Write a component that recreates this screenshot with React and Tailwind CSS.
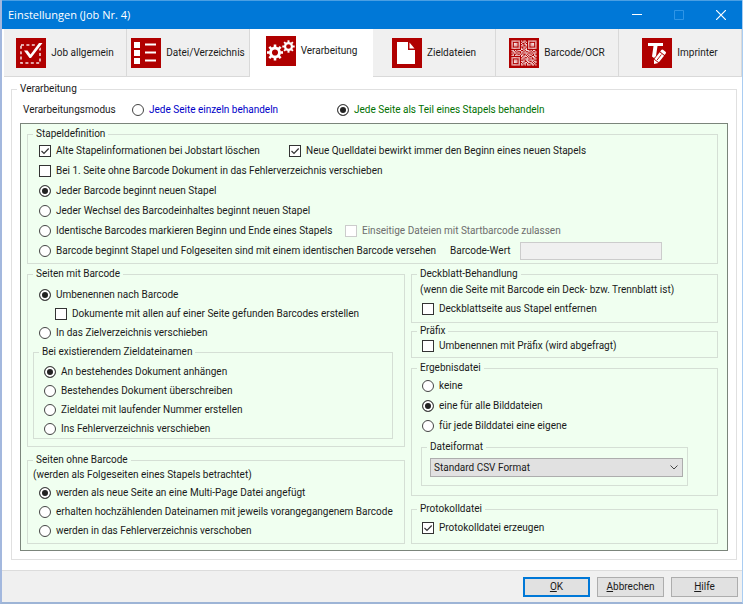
// src/App.jsx
// Job settings dialog - tab "Verarbeitung"
import { useState } from 'react'

// Tab icons, all on a 30x30 red tile
function Tile({ children }) {
  return (
    <svg width="30" height="30" viewBox="0 0 30 30" className="shrink-0" aria-hidden="true">
      <rect width="30" height="30" fill="#b00000" />
      {children}
    </svg>
  )
}

function JobIcon() {
  return (
    <Tile>
      <rect x="5" y="7" width="19" height="18" fill="none" stroke="#f6dcdc" strokeWidth="1.6" strokeDasharray="3 2.4" />
      <path d="M7.500 12l5.500 6L24.500 5.500" fill="none" stroke="#b00000" strokeWidth="5.500" />
      <path d="M8 12.500h3.500l3 4L23 5h3.500L15 20h-1.500z" fill="#fff" />
    </Tile>
  )
}

function ListIcon() {
  return (
    <Tile>
      {[4, 12, 20].map(y => (
        <g key={y} fill="#fff">
          <rect x="3" y={y} width="6" height="6" />
          <rect x="14" y={y + 1.5} width="11" height="2" />
        </g>
      ))}
    </Tile>
  )
}

function Gear({ cx, cy, r }) {
  const teeth = [0, 45, 90, 135, 180, 225, 270, 315]
  return (
    <g transform={`translate(${cx} ${cy})`}>
      <circle r={r * 0.56} fill="none" stroke="#fff" strokeWidth={r * 0.36} />
      {teeth.map(a => (
        <rect key={a} x={-r * 0.16} y={-r} width={r * 0.32} height={r * 0.35} fill="#fff" transform={`rotate(${a})`} />
      ))}
    </g>
  )
}

function GearsIcon() {
  return (
    <Tile>
      <Gear cx={9} cy={16.5} r={8} />
      <Gear cx={22.5} cy={10.5} r={6.2} />
    </Tile>
  )
}

function FileIcon() {
  return (
    <Tile>
      <path d="M5 4h11v8h7v14H5z" fill="#fff" />
      <path d="M17.500 4.500l5 6h-5z" fill="#fff" />
    </Tile>
  )
}

const QR = [
  '111111101011001111111',
  '100000100110101000001',
  '101110101001001011101',
  '101110100101101011101',
  '101110101100101011101',
  '100000100011001000001',
  '111111101010101111111',
  '000000001101100000000',
  '110101110010111010110',
  '011010001101001101001',
  '101101101011110010111',
  '010010010100101101010',
  '110111101101010110011',
  '000000001011101001101',
  '111111100110010110110',
  '100000101101111010011',
  '101110100010110111100',
  '101110101110011001011',
  '101110100101101110101',
  '100000101011010011010',
  '111111101101011101101',
]

function QrIcon() {
  return (
    <Tile>
      <g transform="translate(2.5 2.5) scale(1.19)" fill="#f8e4e4">
        {QR.map((row, y) =>
          row.split('').map((c, x) => (c === '1' ? <rect key={`${x}-${y}`} x={x} y={y} width="1" height="1" /> : null))
        )}
      </g>
    </Tile>
  )
}

function ImprinterIcon() {
  return (
    <Tile>
      <path d="M6 8V5h15v3h-5.500L14 18l-2 2-2-1.500L11.500 8z" fill="#fff" />
      <g transform="translate(12 26) rotate(-52)" fill="#fff">
        <path d="M0 0l3.500-2.800v5.600z" />
        <path d="M4.300-2.800h8.500v5.600H4.300z" />
        <path d="M13.600-2.800h1.900a1.200 1.200 0 0 1 1.200 1.200v3.200a1.200 1.200 0 0 1-1.200 1.200h-1.900z" />
        <path d="M5 0h7" stroke="#b00000" strokeWidth="0.8" />
      </g>
    </Tile>
  )
}

const TABS = [
  { label: 'Job allgemein', Icon: JobIcon },
  { label: 'Datei/Verzeichnis', Icon: ListIcon },
  { label: 'Verarbeitung', Icon: GearsIcon },
  { label: 'Zieldateien', Icon: FileIcon },
  { label: 'Barcode/OCR', Icon: QrIcon },
  { label: 'Imprinter', Icon: ImprinterIcon },
]

function Group({ title, className = '', children }) {
  return (
    <fieldset className={`min-w-0 border border-[#d5dfd5] ${className}`}>
      <legend className="ml-[5px] px-[3px] leading-[12px]">{title}</legend>
      {children}
    </fieldset>
  )
}

function Radio({ name, checked, className = 'h-[19px]', children }) {
  return (
    <label className={`flex items-center gap-[5px] whitespace-nowrap ${className}`}>
      <input
        type="radio"
        name={name}
        defaultChecked={checked}
        className="size-3 shrink-0 appearance-none rounded-full border border-[#444] bg-white checked:bg-[#222] checked:shadow-[inset_0_0_0_2px_#fff]"
      />
      {children}
    </label>
  )
}

function Check({ checked, disabled, className = 'h-[19px]', children }) {
  return (
    <label className={`flex items-center gap-[5px] whitespace-nowrap ${disabled ? 'text-[#6d6d6d]' : ''} ${className}`}>
      <span className="relative flex size-3 shrink-0">
        <input
          type="checkbox"
          defaultChecked={checked}
          disabled={disabled}
          className="peer size-3 appearance-none border border-[#333] bg-white disabled:border-[#ccc]"
        />
        <svg viewBox="0 0 12 12" className="pointer-events-none absolute inset-0 hidden peer-checked:block" aria-hidden="true">
          <path d="M2.500 6l2.500 2.500L9.700 3.500" fill="none" stroke="#333" strokeWidth="1.2" />
        </svg>
      </span>
      {children}
    </label>
  )
}

function TitleBar() {
  return (
    <header className="flex h-[29px] items-center border-t border-[#4a9fe3] bg-[#0078d7] pl-1.5 text-white">
      <h1 className="flex-1 font-['Open_Sans','Noto_Sans',sans-serif] text-[11px]">Einstellungen (Job Nr. 4)</h1>
      <button aria-label="Minimieren" className="flex h-full w-[42px] items-center justify-center">
        <svg width="10" height="10" viewBox="0 0 10 10"><path d="M0 4.500h10" stroke="#fff" /></svg>
      </button>
      <button aria-label="Maximieren" disabled className="flex h-full w-[42px] items-center justify-center">
        <svg width="10" height="10" viewBox="0 0 10 10"><path d="M.5.5h9v9h-9z" fill="none" stroke="#2f95e6" /></svg>
      </button>
      <button aria-label="Schließen" className="flex h-full w-[42px] items-center justify-center">
        <svg width="10" height="10" viewBox="0 0 10 10"><path d="M0 0l10 10M10 0L0 10" stroke="#fff" strokeWidth="1.2" /></svg>
      </button>
    </header>
  )
}

export default function App() {
  const [tab, setTab] = useState(2)

  return (
    <div className="flex min-h-screen flex-col border-r border-b-2 border-l-2 border-r-[#a9cdf2] border-b-[#9db4d6] border-l-[#a3b8de] bg-white font-[Roboto,'Liberation_Sans',sans-serif] text-[10px] leading-4 text-[#1a1a1a]">
      <TitleBar />

      <div role="tablist" className="grid h-12 grid-cols-6 pl-0.5">
        {TABS.map(({ label, Icon }, i) => (
          <button
            key={label}
            role="tab"
            aria-selected={tab === i}
            onClick={() => setTab(i)}
            className={`flex items-center justify-center gap-[5px] whitespace-nowrap ${
              tab === i ? 'bg-white pb-1' : 'border-r border-b border-[#d9d9d9] bg-[#f0f0f0]'
            }`}
          >
            <Icon />
            {label}
          </button>
        ))}
      </div>

      <main className="flex-1 pt-1.5 pr-[5px] pb-[10px] pl-[9px]">
        <fieldset className="min-w-0 border border-[#e0e0e0] px-2 pb-2">
          <legend className="-ml-[3px] px-[3px] leading-[12px]">Verarbeitung</legend>

          <div className="flex h-7 items-center pt-0.5 pl-[3px]">
            <span className="w-[109px]">Verarbeitungsmodus</span>
            <Radio name="modus" className="w-[205px] text-[#0000c8]">Jede Seite einzeln behandeln</Radio>
            <Radio name="modus" checked className="text-[#007000]">Jede Seite als Teil eines Stapels behandeln</Radio>
          </div>

          <div className="border border-[#7b857b] bg-[#f0fff0] pt-1 pr-[9px] pb-1.5 pl-1.5">
            {/* Batch definition */}
            <Group title="Stapeldefinition" className="pt-px pb-0.5">
              <div className="flex flex-col pl-[11px]">
                <div className="flex">
                  <Check checked className="h-5 w-[250px]">Alte Stapelinformationen bei Jobstart löschen</Check>
                  <Check checked className="h-5">Neue Quelldatei bewirkt immer den Beginn eines neuen Stapels</Check>
                </div>
                <Check className="h-5">Bei 1. Seite ohne Barcode Dokument in das Fehlerverzeichnis verschieben</Check>
                <Radio name="stapel" checked className="h-5">Jeder Barcode beginnt neuen Stapel</Radio>
                <Radio name="stapel" className="h-5">Jeder Wechsel des Barcodeinhaltes beginnt neuen Stapel</Radio>
                <div className="flex">
                  <Radio name="stapel" className="h-5 w-[306px]">Identische Barcodes markieren Beginn und Ende eines Stapels</Radio>
                  <Check disabled className="h-5">Einseitige Dateien mit Startbarcode zulassen</Check>
                </div>
                <div className="flex items-center">
                  <Radio name="stapel" className="h-5 w-[411px]">Barcode beginnt Stapel und Folgeseiten sind mit einem identischen Barcode versehen</Radio>
                  <label htmlFor="barcode-wert" className="w-[70px]">Barcode-Wert</label>
                  <input id="barcode-wert" type="text" disabled className="h-[18px] w-[142px] border border-[#ccc] bg-[#f0f0f0] px-1" />
                </div>
              </div>
            </Group>

            <div className="mt-1 grid grid-cols-[minmax(0,378fr)_minmax(0,307fr)] gap-1.5">
              {/* Left column */}
              <div className="flex flex-col gap-[7px]">
                <Group title="Seiten mit Barcode" className="pt-[5px] pb-[7px]">
                  <div className="pl-[11px]">
                    <Radio name="mit" checked>Umbenennen nach Barcode</Radio>
                    <Check className="h-[19px] pl-4">Dokumente mit allen auf einer Seite gefunden Barcodes erstellen</Check>
                    <Radio name="mit">In das Zielverzeichnis verschieben</Radio>
                  </div>
                  <Group title="Bei existierendem Zieldateinamen" className="mt-1 mr-[11px] ml-[5px] pt-1">
                    <div className="pl-[10px]">
                      <Radio name="existiert" checked>An bestehendes Dokument anhängen</Radio>
                      <Radio name="existiert">Bestehendes Dokument überschreiben</Radio>
                      <Radio name="existiert">Zieldatei mit laufender Nummer erstellen</Radio>
                      <Radio name="existiert">Ins Fehlerverzeichnis verschieben</Radio>
                    </div>
                  </Group>
                </Group>

                <Group title="Seiten ohne Barcode" className="pb-[3px]">
                  <p className="pl-[5px] leading-[17px]">(werden als Folgeseiten eines Stapels betrachtet)</p>
                  <div className="pl-[11px]">
                    <Radio name="ohne" checked>werden als neue Seite an eine Multi-Page Datei angefügt</Radio>
                    <Radio name="ohne">erhalten hochzählenden Dateinamen mit jeweils vorangegangenem Barcode</Radio>
                    <Radio name="ohne">werden in das Fehlerverzeichnis verschoben</Radio>
                  </div>
                </Group>
              </div>

              {/* Right column */}
              <div className="flex flex-col">
                <Group title="Deckblatt-Behandlung" className="pt-px pb-1">
                  <p className="pl-2 leading-[17px]">(wenn die Seite mit Barcode ein Deck- bzw. Trennblatt ist)</p>
                  <Check className="mt-px h-[19px] pl-[10px]">Deckblattseite aus Stapel entfernen</Check>
                </Group>
                <Group title="Präfix" className="mt-0.5 pb-0.5">
                  <Check className="h-[18px] pl-[10px]">Umbenennen mit Präfix (wird abgefragt)</Check>
                </Group>
                <Group title="Ergebnisdatei" className="mt-1 pt-0.5 pb-[9px]">
                  <div className="pl-[10px]">
                    <Radio name="ergebnis" className="h-5">keine</Radio>
                    <Radio name="ergebnis" checked className="h-5">eine für alle Bilddateien</Radio>
                    <Radio name="ergebnis" className="h-5">für jede Bilddatei eine eigene</Radio>
                  </div>
                  <Group title="Dateiformat" className="mt-[5px] mr-[29px] ml-[9px] pt-[5px] pb-2">
                    <div className="relative mr-1 ml-2">
                      <select aria-label="Dateiformat" className="block h-[19px] w-full appearance-none border border-[#adadad] bg-[#e1e1e1] pl-[3px]">
                        <option>Standard CSV Format</option>
                      </select>
                      <svg width="8" height="5" viewBox="0 0 8 5" className="pointer-events-none absolute top-[7px] right-[5px]" aria-hidden="true">
                        <path d="M.5.5L4 4l3.500-3.500" fill="none" stroke="#444" />
                      </svg>
                    </div>
                  </Group>
                </Group>
                <Group title="Protokolldatei" className="mt-[7px] flex-1 pt-[3px]">
                  <Check checked className="h-[19px] pl-[10px]">Protokolldatei erzeugen</Check>
                </Group>
              </div>
            </div>
          </div>
        </fieldset>
      </main>

      <footer className="flex h-8 items-center justify-end gap-[7px] border-t border-[#dcdcdc] bg-[#f0f0f0] pr-1">
        <button className="h-5 w-[67px] border-2 border-[#0078d7] bg-[#e1e1e1]"><u>O</u>K</button>
        <button className="h-5 w-[67px] border border-[#adadad] bg-[#e1e1e1]"><u>A</u>bbrechen</button>
        <button className="h-5 w-[67px] border border-[#adadad] bg-[#e1e1e1]"><u>H</u>ilfe</button>
      </footer>
    </div>
  )
}
